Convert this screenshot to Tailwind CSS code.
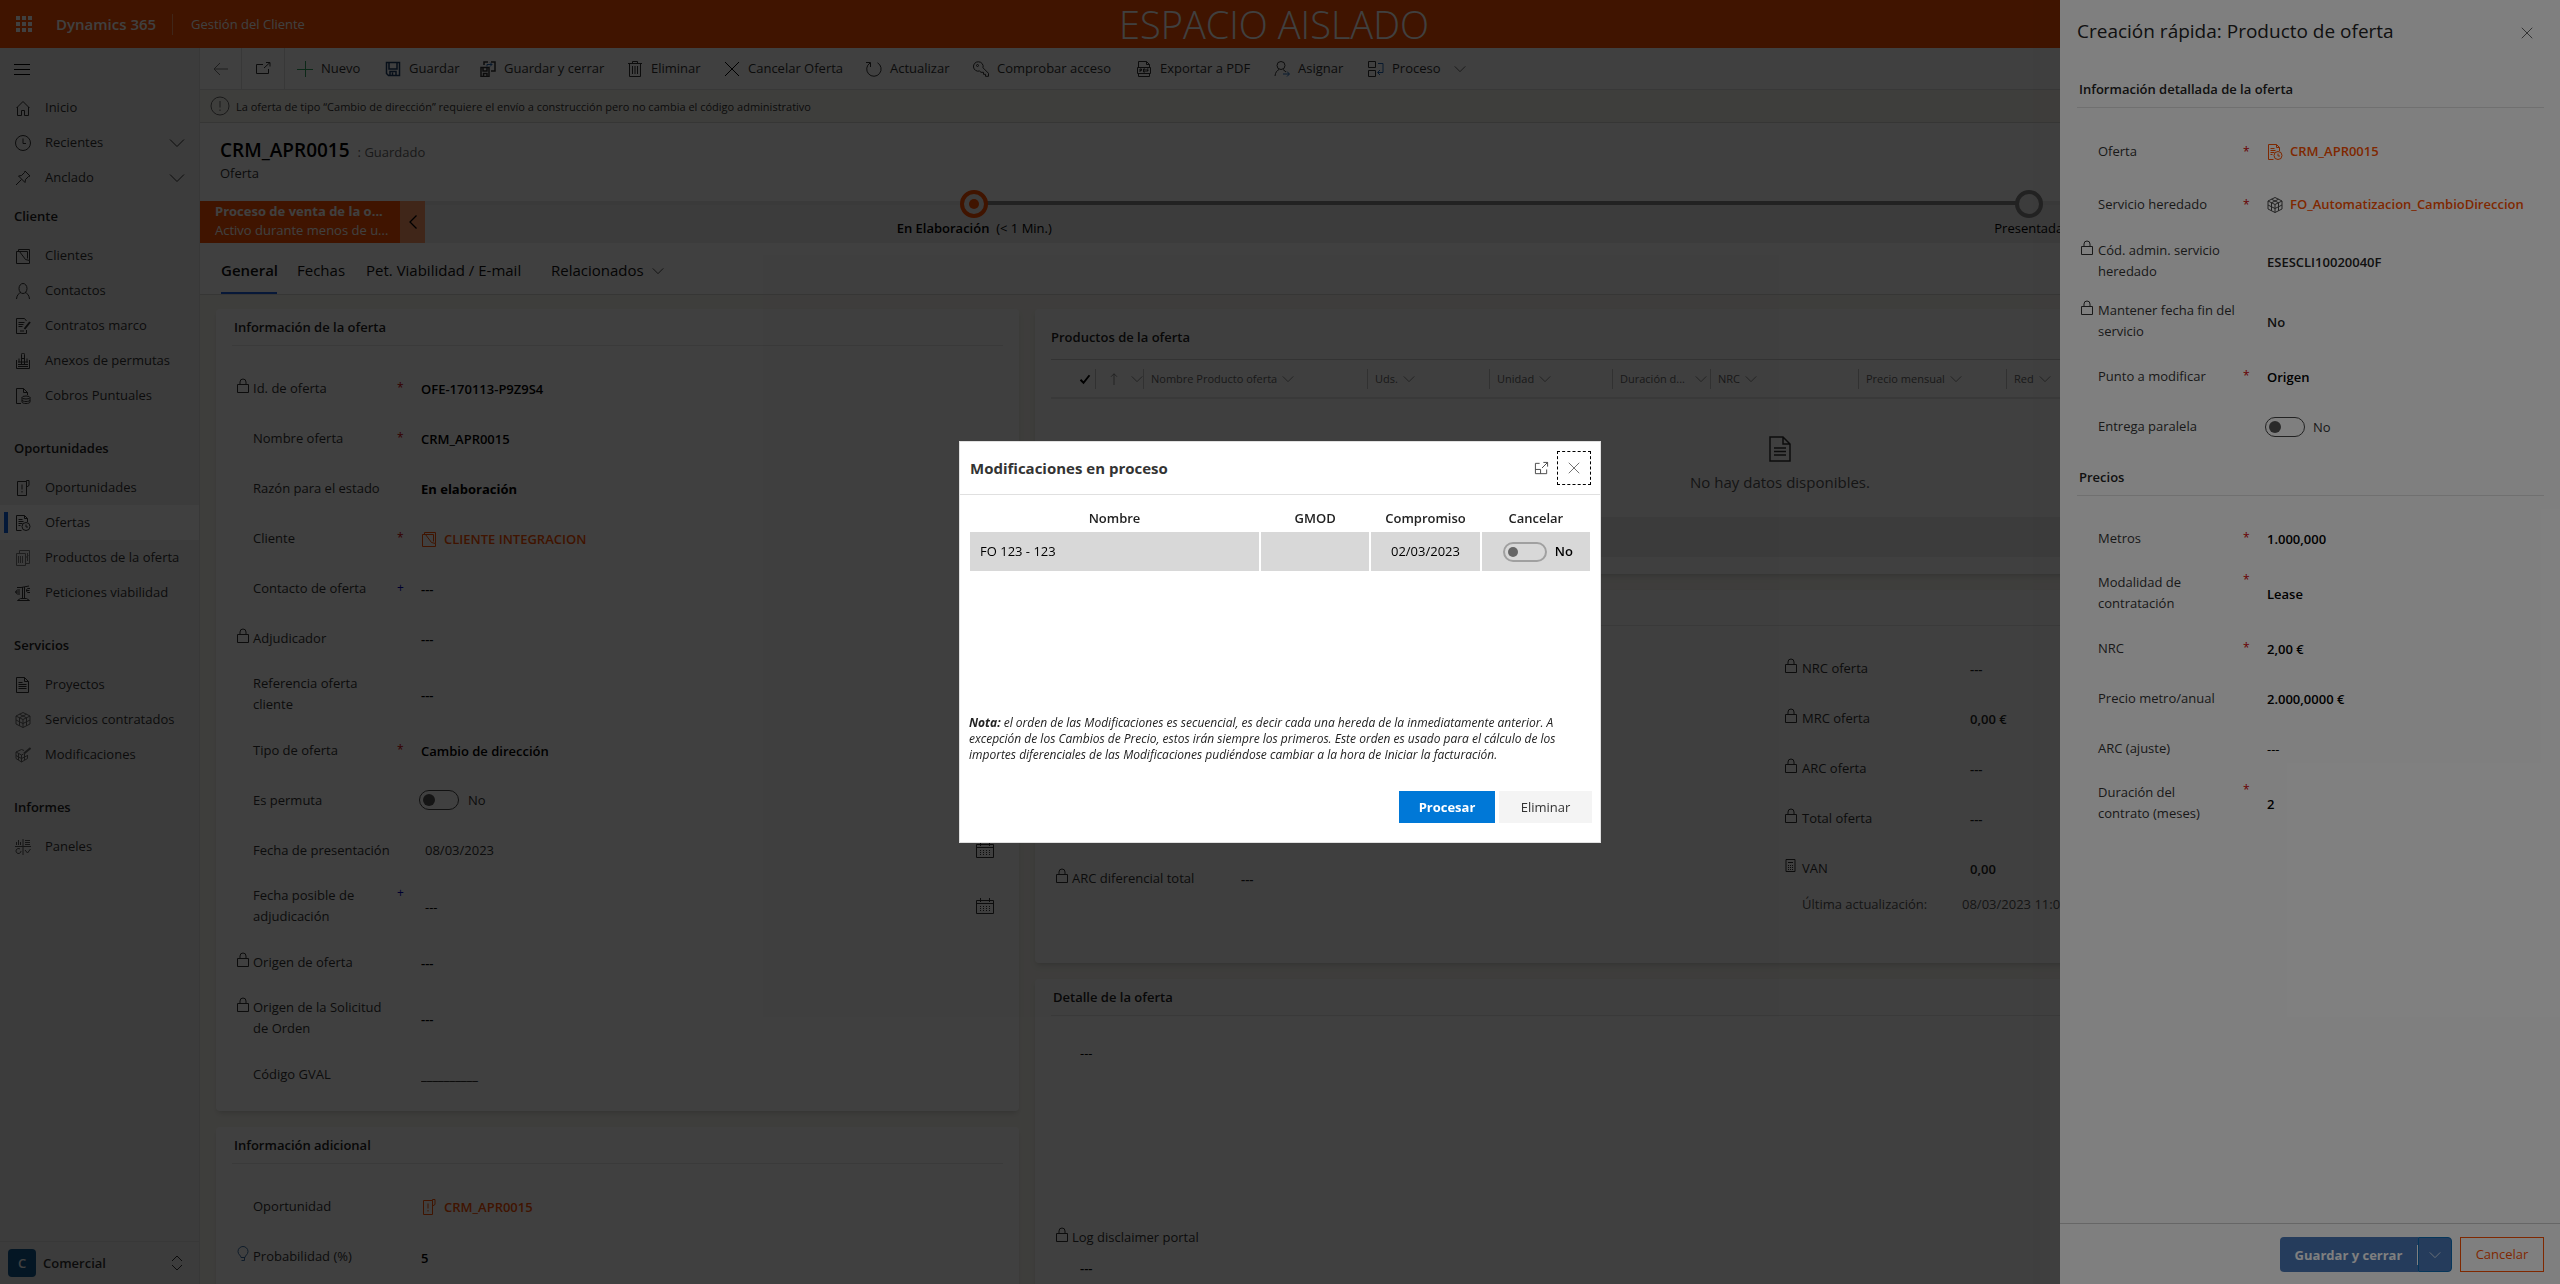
<!DOCTYPE html>
<html lang="es">
<head>
<meta charset="utf-8">
<title>CRM_APR0015 - Dynamics 365</title>
<script src="https://cdn.jsdelivr.net/npm/@tailwindcss/browser@4"></script>
</head>
<body class="h-screen overflow-hidden bg-white font-['Open_Sans','Noto_Sans',sans-serif] text-[13px] leading-[21px] text-[#333] [&_svg]:fill-none [&_svg]:stroke-current">

<!-- Icon sprite -->
<svg class="hidden" aria-hidden="true">
  <symbol id="home" viewBox="0 0 16 16"><path d="M1.500 8 8 1.500 14.500 8M2.500 7v8.500h4v-5h3v5h4V7"/></symbol>
  <symbol id="clock" viewBox="0 0 16 16"><circle cx="8" cy="8" r="7.500"/><path d="M8 3.500V8.500h3"/></symbol>
  <symbol id="pin" viewBox="0 0 16 16"><path d="M10 1l5 5-1.500.5-3 3-.5 3L3.500 6l3-.5 3-3zM6.500 9.500 1 15"/></symbol>
  <symbol id="down" viewBox="0 0 16 16"><path d="M1 4.500l7 7 7-7"/></symbol>
  <symbol id="accounts" viewBox="0 0 16 16"><path d="M1.500 3.500v12h13v-3l-4-1-6-8zM3.500 3.500v-2h11v11M3.500 3.500h9v7"/></symbol>
  <symbol id="person" viewBox="0 0 16 16"><ellipse cx="8" cy="5.500" rx="4" ry="5"/><path d="M1.500 16c.3-4 2.500-6 4.500-6.500M14.500 16c-.3-4-2.500-6-4.500-6.500"/></symbol>
  <symbol id="contract" viewBox="0 0 16 16"><path d="M11.500 12v3.500h-10V.5h8l2 2.500M3.500 4.500h6M3.500 6.500h5M3.500 8.500h4M5 13h4"/><path stroke-width="2" d="M15 4l-5.500 7"/></symbol>
  <symbol id="hand" viewBox="0 0 16 16"><path d="M1.500 7v8.500h13V7M6.500 11V1.500a1.500 1.500 0 0 1 3 0V11M3 9h10M3 11.500h10M3 13.500h10M4 5.500v4M12 5.500v4M6 5.500h4"/></symbol>
  <symbol id="coins" viewBox="0 0 16 16"><path d="M6 15.500H1.500V.5h7l4 4V7M8.500.5v4h4"/><ellipse cx="11" cy="9.500" rx="4" ry="1.500"/><path d="M7 9.500v4.500c0 2 8 2 8 0V9.500M7 12c0 2 8 2 8 0"/></symbol>
  <symbol id="opp" viewBox="0 0 16 16"><path d="M2.500 1.500h9v14h-9zM11.500 1.500v-1h2.500v5l-2.500 1.500M7 4.500v5M7 11v1.500"/></symbol>
  <symbol id="offer" viewBox="0 0 16 16"><path d="M6.500 15.500h-5V.5h8l3 3V7M9.500.5v3h3M3.500 4.500h4M3.500 6.500h5M3.500 8.500h4M3.500 10.500h2"/><circle cx="11" cy="11.500" r="4"/><path d="M11 9.500v2.500h2"/></symbol>
  <symbol id="products" viewBox="0 0 16 16"><path d="M1.500 3.500h9v12h-9zM4.500 3V.5h10v13h-4M3.500 6v7M5.500 6v7M7.500 6v7M12.500 3v8M10.500 8l3-3"/></symbol>
  <symbol id="scale" viewBox="0 0 16 16"><path d="M2 2.500h4l8-1.500M7.500 2v12M9.500 2v12M2.500 15.500l3-2h6l3 2zM5 5H2.500c-2 0-2 4 0 4H5M0 7h5M15 3.500h-2c-2 0-2 4 0 4h2M11 5.500h3.500"/></symbol>
  <symbol id="doc" viewBox="0 0 16 16"><path d="M1.500.5h8l4 4v11h-12zM9.500.5v4h4M3.500 5.500h4M3.500 7.500h8M3.500 9.500h8M3.500 11.500h8"/></symbol>
  <symbol id="cube" viewBox="0 0 16 16"><path d="M8 .5l7 3.500v8l-7 3.500L1 12V4zM1 4l7 3.500L15 4M8 7.500v8M1 8l7 3.500L15 8M4.500 2.200l7 3.600v8M11.500 2.200l-7 3.600v8"/></symbol>
  <symbol id="cubepen" viewBox="0 0 16 16"><path d="M9 3.500 6.500 2.500 1 5v6.500L6.500 15l6-3.500V8M1 5l5.500 3 2-1M6.500 8v7M1 8.500l5.500 3 6-3M3.500 6.500v6.500M9.500 7v6"/><path stroke-width="2" d="M15.500 1 9 6.500"/></symbol>
  <symbol id="panels" viewBox="0 0 16 16"><path d="M0 7.500h16M8 0v16M1.500 6V3M3.500 6V1M5.500 6V3M10 1.500h5M10 3.500h5M10 5.500h5M5 10a2.500 2.500 0 1 0 1 2M10 11l2.500 3 3-4"/></symbol>
  <symbol id="lock" viewBox="0 0 12 21"><path d="M.5 6.500h11v8H.5zM3 6.500V4a3 3 0 0 1 6 0v2.500"/></symbol>
  <symbol id="bulb" viewBox="0 0 12 21"><path d="M4 11.500c0-2-3-3-3-6a5 5 0 0 1 10 0c0 3-3 4-3 6zM4.500 14.500h3v-3"/></symbol>
  <symbol id="calc" viewBox="0 0 12 21"><path d="M1 1.500h9v12H1zM3 4.500h5"/><path stroke-dasharray="1 1" d="M3 7.500h5M3 9.500h5M3 11.500h5"/></symbol>
  <symbol id="cal" viewBox="0 0 18 16"><path d="M.5 2.500h17v13H.5zM.5 5.500h17M4.500 0v4M13.500 0v4"/><path stroke-dasharray="1 2" d="M4 8.500h11M4 10.500h11M4 12.500h11"/></symbol>
  <symbol id="back" viewBox="0 0 16 16"><path d="M15 8H1.500M7 2 1 8l6 6"/></symbol>
  <symbol id="popout" viewBox="0 0 16 16"><path d="M8 3.500H1.500v9h12V8M9 7l6-5.500M11 1.500h4v4"/></symbol>
  <symbol id="expand" viewBox="0 0 16 16"><path d="M6 2.500H1.500v11h12V9M1.500 9h5.500v4.500M8.500 7.500l6-6M10 1.500h4.500V6"/></symbol>
  <symbol id="plus" viewBox="0 0 16 16"><path d="M8.500 0v16M0 8.500h16"/></symbol>
  <symbol id="save" viewBox="0 0 16 16"><path stroke-width="1.500" d="M1.500 1.500h13v13h-11l-2-2zM4 2v6h8V2M5 14.500v-4h6v4M7.500 11.500v3"/></symbol>
  <symbol id="saveclose" viewBox="0 0 16 16"><path stroke-width="1.500" d="M1 6.500h8v9H1zM3 7v3h4V7M3.500 15v-2.500H7V15M4 4V1h4M11 1h4v9h-4"/><path stroke="#2266b3" d="M7 5.500V3.500h5M10 1.500l2 2-2 2"/></symbol>
  <symbol id="trash" viewBox="0 0 16 16"><path d="M1 2.500h14M5.500 2V.5h5V2M2.500 2.500v13h11v-13M5.500 5v8M8 5v8M10.500 5v8"/></symbol>
  <symbol id="x" viewBox="0 0 16 16"><path d="M1 1l14 14M15 1 1 15"/></symbol>
  <symbol id="refresh" viewBox="0 0 16 16"><path d="M11.500 1.800A7.200 7.200 0 1 1 4 2M4.500 6V1.500H0"/></symbol>
  <symbol id="key" viewBox="0 0 16 16"><path d="M5.500.8a4.700 4.700 0 0 1 4.500 6l5.500 5.500v3h-3v-2h-2v-2H8L6.500 10A4.700 4.700 0 1 1 5.500.8z"/><circle cx="4.500" cy="4.500" r="1"/></symbol>
  <symbol id="pdf" viewBox="0 0 16 16"><path d="M2.500 6V.5h8l3 3V6M10.500.5v3h3M1.500 6.500h13v6h-13zM2.500 13v2.500h11V13M4 11V8h1.500v1.500H4M7.500 8v3H9V8zM11 11V8h1.500M11 9.500h1.500"/></symbol>
  <symbol id="assign" viewBox="0 0 16 16"><circle cx="7" cy="4.500" r="4"/><path d="M1 15c.3-3.500 2-5.500 4-6.500M9 8.500l3 2.500"/><path stroke="#2266b3" d="M9 13h6M13 10.500l2.500 2.500-2.500 2.500"/></symbol>
  <symbol id="flow" viewBox="0 0 16 16"><path d="M.5.5h7v6h-7zM.5 9.500h7v6h-7z"/><path stroke="#2266b3" d="M10 2.500h5v9h-5M12 9l-2.500 2.500L12 14"/></symbol>
  <symbol id="info" viewBox="0 0 20 20"><circle cx="10" cy="10" r="9"/><path d="M10 5v6.500M10 13.500V15"/></symbol>
  <symbol id="check" viewBox="0 0 16 16"><path stroke-width="2.500" d="M2 9l4 4 8-10"/></symbol>
  <symbol id="up" viewBox="0 0 16 16"><path d="M8 16V1M4 5l4-4 4 4"/></symbol>
  <symbol id="left" viewBox="0 0 10 16"><path stroke-width="1.300" d="M8.500 1.500 2 8l6.500 6.500"/></symbol>
  <symbol id="nodata" viewBox="0 0 22 26"><path stroke-width="1.500" d="M1 1h13l7 7v17H1zM14 1v7h7M5 12h12M5 15.500h12M5 19h12"/></symbol>
  <symbol id="updown" viewBox="0 0 12 16"><path d="M1 6l5-5 5 5M1 10l5 5 5-5"/></symbol>
</svg>

<div class="flex h-screen flex-col">
  <header class="relative flex h-12 shrink-0 items-center bg-[#ff5000] text-white">
    <button aria-label="Iniciador de aplicaciones" class="ml-4 grid size-4 grid-cols-3 gap-[2px] [&>i]:size-1 [&>i]:bg-white"><i></i><i></i><i></i><i></i><i></i><i></i><i></i><i></i><i></i></button>
    <a href="#" class="ml-6 w-[116px] text-[15px] font-semibold">Dynamics 365</a>
    <a href="#" class="border-l border-white/40 pl-[18px] text-[13px]">Gestión del Cliente</a>
    <div class="absolute inset-x-0 pr-3 text-center text-[38px] leading-[48px] font-light">ESPACIO AISLADO</div>
  </header>

  <div class="flex min-h-0 flex-1">
    <nav class="flex w-[200px] shrink-0 flex-col border-r border-[#ddd] bg-[#efefef] [&_a]:flex [&_a]:h-[35px] [&_a]:items-center [&_a]:gap-[14px] [&_a]:pl-[15px] [&_a]:whitespace-nowrap [&_h2]:h-[43px] [&_h2]:pl-[14px] [&_h2]:leading-[43px] [&_h2]:font-semibold [&_h2]:text-[#222] [&_svg]:size-4 [&_svg]:shrink-0">
      <button aria-label="Menú" class="ml-[14px] flex h-[42px] w-4 flex-col justify-center gap-1 [&>i]:h-px [&>i]:bg-black"><i></i><i></i><i></i></button>
      <a href="#"><svg><use href="#home"/></svg>Inicio</a>
      <a href="#"><svg><use href="#clock"/></svg><span class="flex-1">Recientes</span><svg class="mr-[14px]"><use href="#down"/></svg></a>
      <a href="#"><svg><use href="#pin"/></svg><span class="flex-1">Anclado</span><svg class="mr-[14px]"><use href="#down"/></svg></a>
      <h2>Cliente</h2>
      <a href="#"><svg><use href="#accounts"/></svg>Clientes</a>
      <a href="#"><svg><use href="#person"/></svg>Contactos</a>
      <a href="#"><svg><use href="#contract"/></svg>Contratos marco</a>
      <a href="#"><svg><use href="#hand"/></svg>Anexos de permutas</a>
      <a href="#"><svg><use href="#coins"/></svg>Cobros Puntuales</a>
      <h2 class="mt-[14px]">Oportunidades</h2>
      <a href="#"><svg><use href="#opp"/></svg>Oportunidades</a>
      <a href="#" class="relative bg-[#fdfdfd]"><i class="absolute left-1 h-[21px] w-1 bg-[#0f5fe0]"></i><svg><use href="#offer"/></svg>Ofertas</a>
      <a href="#"><svg class="text-[#777]"><use href="#products"/></svg>Productos de la oferta</a>
      <a href="#"><svg><use href="#scale"/></svg>Peticiones viabilidad</a>
      <h2 class="mt-[14px]">Servicios</h2>
      <a href="#"><svg><use href="#doc"/></svg>Proyectos</a>
      <a href="#"><svg class="text-[#666]"><use href="#cube"/></svg>Servicios contratados</a>
      <a href="#"><svg class="text-[#666]"><use href="#cubepen"/></svg>Modificaciones</a>
      <h2 class="mt-[14px]">Informes</h2>
      <a href="#"><svg class="text-[#555]"><use href="#panels"/></svg>Paneles</a>
      <button class="mt-auto flex h-[43px] items-center border-t border-[#ddd] pl-2 text-left font-semibold">
        <span class="mr-[7px] size-7 rounded-sm bg-[#11588f] text-center leading-7 text-white">C</span>Comercial
        <svg class="mr-[14px] ml-auto"><use href="#updown"/></svg>
      </button>
    </nav>

    <main class="flex min-w-0 flex-1 flex-col">
      <div class="flex h-[42px] shrink-0 border-b border-[#ddd] [&_svg]:size-4 [&_svg]:shrink-0 [&>button]:flex [&>button]:items-center [&>button]:gap-2 [&>button]:whitespace-nowrap">
        <button aria-label="Atrás" class="w-[42px] justify-center border-r border-[#ddd] text-[#777]"><svg><use href="#back"/></svg></button>
        <button aria-label="Abrir en ventana nueva" class="w-[43px] justify-center border-r border-[#ddd]"><svg><use href="#popout"/></svg></button>
        <button class="ml-3 w-[88px]"><svg class="text-[#2f9e5b]"><use href="#plus"/></svg>Nuevo</button>
        <button class="w-[95px]"><svg class="text-[#1d3d66]"><use href="#save"/></svg>Guardar</button>
        <button class="w-[147px]"><svg><use href="#saveclose"/></svg>Guardar y cerrar</button>
        <button class="w-[97px]"><svg><use href="#trash"/></svg>Eliminar</button>
        <button class="w-[142px]"><svg class="text-black"><use href="#x"/></svg>Cancelar Oferta</button>
        <button class="w-[107px]"><svg><use href="#refresh"/></svg>Actualizar</button>
        <button class="w-[163px]"><svg><use href="#key"/></svg>Comprobar acceso</button>
        <button class="w-[138px]"><svg><use href="#pdf"/></svg>Exportar a PDF</button>
        <button class="w-[94px]"><svg><use href="#assign"/></svg>Asignar</button>
        <button class="w-[100px]"><svg><use href="#flow"/></svg>Proceso<svg class="ml-auto p-[2px]"><use href="#down"/></svg></button>
      </div>

      <div class="flex h-[33px] shrink-0 items-center gap-[6px] border-b border-[#d8d8d4] bg-[#f8f7ee] pl-[10px] text-[11px]"><svg class="size-5 text-[#666]"><use href="#info"/></svg>La oferta de tipo “Cambio de dirección” requiere el envío a construcción pero no cambia el código administrativo</div>

      <div class="h-[78px] shrink-0 pt-[14px] pl-5">
        <div class="flex h-[26px] items-baseline gap-2"><h1 class="text-[19px] leading-[26px] font-semibold text-black">CRM_APR0015</h1><span class="text-[#666]">: Guardado</span></div>
        <div class="font-medium">Oferta</div>
      </div>

      <div class="flex h-[42px] shrink-0 bg-[#efefef]">
        <div class="w-[200px] bg-[#ff5000] pt-px pl-[15px] leading-[19px] text-white"><div class="font-bold">Proceso de venta de la o...</div><div>Activo durante menos de u...</div></div>
        <button aria-label="Contraer" class="flex w-[25px] items-center justify-center bg-[#ff9666] text-black"><svg class="h-4 w-[10px]"><use href="#left"/></svg></button>
        <ol class="relative flex flex-1 border-t-4 border-[#e6e6e6] pr-1 pl-[22px] text-center text-black">
          <li class="relative flex-1 pt-[13px]">
            <i class="absolute -top-1 left-1/2 h-1 w-full bg-[#888]"></i>
            <button aria-label="En Elaboración" class="absolute -top-[15px] left-1/2 flex size-7 -translate-x-1/2 items-center justify-center rounded-full border-4 border-[#ff5000] bg-[#eee]"><i class="size-[10px] rounded-full bg-[#ff5000]"></i></button>
            <b class="font-semibold">En Elaboración</b>&nbsp; <span class="font-medium">(&lt; 1 Min.)</span>
          </li>
          <li class="relative flex-1 pt-[13px]">
            <button aria-label="Presentada" class="absolute -top-[15px] left-1/2 size-7 -translate-x-1/2 rounded-full border-4 border-[#888] bg-[#eee]"></button>
            Presentada
          </li>
        </ol>
      </div>

      <div role="tablist" class="flex h-[52px] shrink-0 border-b border-[#d8d8d4] pl-[21px] text-[15px] text-[#111] [&>button]:h-[51px] [&>button]:pt-1 [&>button]:text-left [&>button]:whitespace-nowrap">
        <button role="tab" class="mr-5 w-14 border-b-2 border-[#1f5fdf] pt-[6px]! font-semibold">General</button>
        <button role="tab" class="w-[69px]">Fechas</button>
        <button role="tab" class="w-[185px]">Pet. Viabilidad / E-mail</button>
        <button role="tab" class="flex items-center gap-2">Relacionados<svg class="size-3"><use href="#down"/></svg></button>
      </div>

      <div class="grid min-h-0 flex-1 grid-cols-[803fr_1490fr] gap-4 overflow-hidden bg-[#f8f7f0] pt-[14px] pr-[35px] pl-4">
        <div class="flex flex-col gap-4">
          <section class="rounded bg-white px-4 pb-3 shadow-md">
            <h2 class="border-b border-[#e6e6e6] pl-[2px] leading-9 font-semibold text-[#222]">Información de la oferta</h2>
            <div class="pt-[17px] pl-[5px] [&_i]:text-xs [&_i]:text-[#d00000] [&_i]:not-italic [&_input]:mt-[2px] [&_input]:w-full [&_input]:font-semibold [&_input]:text-black [&_svg]:h-[21px] [&_svg]:w-3 [&>div]:grid [&>div]:min-h-[50px] [&>div]:grid-cols-[16px_144px_24px_1fr] [&>div]:items-center [&>div]:py-[10px]">
              <div><svg><use href="#lock"/></svg><label for="f1">Id. de oferta</label><i>*</i><input id="f1" value="OFE-170113-P9Z9S4" readonly></div>
              <div><span></span><label for="f2">Nombre oferta</label><i>*</i><input id="f2" value="CRM_APR0015"></div>
              <div><span></span><label for="f3">Razón para el estado</label><span></span><input id="f3" class="font-bold!" value="En elaboración"></div>
              <div><span></span><span>Cliente</span><i>*</i><a href="#" class="mt-[2px] flex items-center gap-[7px] font-semibold text-[#ff5000]"><svg class="size-4!"><use href="#accounts"/></svg>CLIENTE INTEGRACION</a></div>
              <div><span></span><label for="f5">Contacto de oferta</label><i class="text-[#0000c0]!">+</i><input id="f5" value="---"></div>
              <div><svg><use href="#lock"/></svg><label for="f6">Adjudicador</label><span></span><input id="f6" value="---" readonly></div>
              <div><span></span><label for="f7">Referencia oferta<br>cliente</label><span></span><input id="f7" value="---"></div>
              <div><span></span><label for="f8">Tipo de oferta</label><i>*</i><input id="f8" value="Cambio de dirección"></div>
              <div><span></span><label for="f9">Es permuta</label><span></span><span class="flex items-center"><input id="f9" type="checkbox" role="switch" class="mt-0! -ml-[2px] mr-[9px] h-5 w-10! appearance-none rounded-full border border-[#444] before:m-[3px] before:block before:size-3 before:rounded-full before:bg-[#555]">No</span></div>
              <div><span></span><label for="f10">Fecha de presentación</label><span></span><span class="flex items-center pr-[9px] pl-1"><input id="f10" class="mt-0! font-normal! text-[#333]!" value="08/03/2023"><svg class="h-4! w-[18px]! shrink-0"><use href="#cal"/></svg></span></div>
              <div><span></span><label for="f11">Fecha posible de<br>adjudicación</label><i class="self-start text-[#0000c0]!">+</i><span class="flex items-center pr-[9px] pl-1"><input id="f11" class="font-normal!" value="---"><svg class="h-4! w-[18px]! shrink-0"><use href="#cal"/></svg></span></div>
              <div><svg><use href="#lock"/></svg><label for="f12">Origen de oferta</label><span></span><input id="f12" value="---" readonly></div>
              <div><svg class="self-start"><use href="#lock"/></svg><label for="f13">Origen de la Solicitud<br>de Orden</label><span></span><input id="f13" value="---" readonly></div>
              <div><span></span><label for="f14">Código GVAL</label><span></span><input id="f14" class="font-normal!" value="__________"></div>
            </div>
          </section>
          <section class="h-60 shrink-0 rounded bg-white px-4 shadow-md">
            <h2 class="border-b border-[#e6e6e6] pl-[2px] leading-9 font-semibold text-[#222]">Información adicional</h2>
            <div class="pt-[17px] pl-[5px] [&_svg]:h-[21px] [&_svg]:w-3 [&>div]:grid [&>div]:h-[50px] [&>div]:grid-cols-[16px_144px_24px_1fr] [&>div]:items-center">
              <div><span></span><span>Oportunidad</span><span></span><a href="#" class="mt-[2px] flex items-center gap-[7px] font-semibold text-[#ff5000]"><svg class="size-4!"><use href="#opp"/></svg>CRM_APR0015</a></div>
              <div><svg class="text-[#3a6ea5]"><use href="#bulb"/></svg><label for="g1">Probabilidad (%)</label><span></span><input id="g1" class="mt-1 font-semibold text-black" value="5"></div>
            </div>
          </section>
        </div>

        <div class="flex flex-col gap-4">
          <section class="h-[265px] shrink-0 rounded bg-white px-4 shadow-md">
            <h2 class="border-b border-[#ccc] pt-[18px] pb-[11px] font-semibold text-[#222]">Productos de la oferta</h2>
            <table class="w-full table-fixed border-b-2 border-[#e4e4e4] text-left text-[11px] text-[#666] [&_div]:flex [&_div]:h-5 [&_div]:items-center [&_div]:gap-[5px] [&_div]:whitespace-nowrap [&_svg]:size-3 [&_th]:h-[38px] [&_th]:p-0 [&_th]:font-medium [&_th+th>div]:border-l [&_th+th>div]:border-[#c4c4c4] [&_th+th>div]:pl-[7px]">
              <thead><tr>
                <th class="w-11"><div class="pl-7 text-black"><svg><use href="#check"/></svg></div></th>
                <th class="w-12"><div class="justify-between pl-3!"><svg><use href="#up"/></svg><svg><use href="#down"/></svg></div></th>
                <th class="w-56"><div>Nombre Producto oferta<svg><use href="#down"/></svg></div></th>
                <th class="w-[122px]"><div>Uds.<svg><use href="#down"/></svg></div></th>
                <th class="w-[123px]"><div>Unidad<svg><use href="#down"/></svg></div></th>
                <th class="w-[98px]"><div>Duración d...<svg class="mr-[3px] ml-auto"><use href="#down"/></svg></div></th>
                <th class="w-[148px]"><div>NRC<svg><use href="#down"/></svg></div></th>
                <th class="w-[148px]"><div>Precio mensual<svg><use href="#down"/></svg></div></th>
                <th><div>Red<svg><use href="#down"/></svg></div></th>
              </tr></thead>
            </table>
            <div class="flex h-[118px] flex-col items-center pt-[37px] text-[15px] text-[#555]"><svg class="mb-[10px] h-[26px] w-[22px] text-[#333]"><use href="#nodata"/></svg>No hay datos disponibles.</div>
            <div class="h-10 bg-[#efefef]"></div>
          </section>

          <section class="h-[373px] shrink-0 rounded bg-white px-4 shadow-md">
            <div class="h-9 border-b border-[#e6e6e6]"></div>
            <div class="flex [&_input]:mt-[2px] [&_input]:font-semibold [&_input]:text-[#222] [&_p]:grid [&_p]:h-[50px] [&_p]:items-center [&_svg]:h-[21px] [&_svg]:w-3">
              <div class="w-[730px] pt-[227px] pl-[5px]">
                <p class="grid-cols-[16px_169px_1fr]"><svg><use href="#lock"/></svg><label for="h0">ARC diferencial total</label><input id="h0" value="---" readonly></p>
              </div>
              <div class="flex-1 pt-[17px] pl-1 [&_p]:grid-cols-[17px_168px_1fr]">
                <p><svg><use href="#lock"/></svg><label for="h1">NRC oferta</label><input id="h1" value="---" readonly></p>
                <p><svg><use href="#lock"/></svg><label for="h2">MRC oferta</label><input id="h2" value="0,00 €" readonly></p>
                <p><svg><use href="#lock"/></svg><label for="h3">ARC oferta</label><input id="h3" value="---" readonly></p>
                <p><svg><use href="#lock"/></svg><label for="h4">Total oferta</label><input id="h4" value="---" readonly></p>
                <p><svg><use href="#calc"/></svg><label for="h5">VAN</label><input id="h5" value="0,00" readonly></p>
                <div class="mt-px flex pl-[17px] text-[#555]"><span class="w-40">Última actualización:</span><time>08/03/2023 11:02</time></div>
              </div>
            </div>
          </section>

          <section class="h-[400px] shrink-0 rounded bg-white px-4 shadow-md [&_input]:block [&_input]:pl-[29px] [&_input]:text-black">
            <h2 class="border-b border-[#e6e6e6] pl-[2px] leading-9 font-semibold text-[#222]">Detalle de la oferta</h2>
            <input aria-label="Detalle" class="mt-[27px]" value="---">
            <div class="mt-[163px] flex pl-[5px]"><svg class="mr-1 h-[21px] w-3"><use href="#lock"/></svg><label for="k2">Log disclaimer portal</label></div>
            <input id="k2" class="mt-[10px] font-semibold" value="---" readonly>
          </section>
        </div>
      </div>
    </main>
  </div>
</div>

<!-- Quick create panel -->
<div class="fixed inset-0 bg-black/50"></div>
<aside class="fixed inset-y-0 right-0 flex w-[500px] flex-col bg-white">
  <div class="flex h-[71px] shrink-0 items-start justify-between pt-[18px] pr-[26px] pl-[17px]">
    <h2 class="text-[19px] leading-[26px] font-medium text-[#222]">Creación rápida: Producto de oferta</h2>
    <button aria-label="Cerrar" class="p-px pt-[9px]"><svg class="size-3"><use href="#x"/></svg></button>
  </div>
  <div class="flex-1 pr-4 pl-[17px] [&_h3]:border-b [&_h3]:border-[#e0e0e0] [&_h3]:pl-[2px] [&_h3]:leading-9 [&_h3]:font-semibold [&_h3]:text-[#222] [&_i]:text-xs [&_i]:text-[#d00000] [&_i]:not-italic [&_input]:mt-[2px] [&_input]:w-full [&_input]:font-semibold [&_input]:text-black [&_section]:pt-[17px] [&_section]:pl-1 [&_section>div]:grid [&_section>div]:min-h-[50px] [&_section>div]:grid-cols-[17px_145px_24px_1fr] [&_section>div]:items-center [&_section>div]:py-[9px] [&_svg]:h-[21px] [&_svg]:w-3">
    <h3>Información detallada de la oferta</h3>
    <section>
      <div class="min-h-[53px]!"><span></span><span>Oferta</span><i>*</i><a href="#" class="flex items-center gap-[7px] font-semibold text-[#ff5000]"><svg class="size-4!"><use href="#offer"/></svg>CRM_APR0015</a></div>
      <div class="min-h-[53px]!"><span></span><span>Servicio heredado</span><i>*</i><a href="#" class="flex items-center gap-[7px] font-semibold text-[#ff5000]"><svg class="size-4! text-[#444]"><use href="#cube"/></svg>FO_Automatizacion_CambioDireccion</a></div>
      <div><svg class="self-start"><use href="#lock"/></svg><label for="q3">Cód. admin. servicio<br>heredado</label><span></span><input id="q3" class="text-[#222]!" value="ESESCLI10020040F" readonly></div>
      <div><svg class="self-start"><use href="#lock"/></svg><label for="q4">Mantener fecha fin del<br>servicio</label><span></span><input id="q4" class="text-[#222]!" value="No" readonly></div>
      <div><span></span><label for="q5">Punto a modificar</label><i>*</i><input id="q5" value="Origen"></div>
      <div><span></span><label for="q6">Entrega paralela</label><span></span><span class="flex items-center pt-[2px]"><input id="q6" type="checkbox" role="switch" class="mt-0! -ml-[2px] mr-[8px] h-5 w-10! appearance-none rounded-full border border-[#444] before:m-[3px] before:block before:size-3 before:rounded-full before:bg-[#555]">No</span></div>
    </section>
    <h3 class="mt-2">Precios</h3>
    <section>
      <div><span></span><label for="q7">Metros</label><i>*</i><input id="q7" value="1.000,000"></div>
      <div><span></span><label for="q8">Modalidad de<br>contratación</label><i class="self-start">*</i><input id="q8" value="Lease"></div>
      <div><span></span><label for="q9">NRC</label><i>*</i><input id="q9" value="2,00 €"></div>
      <div><span></span><label for="q10">Precio metro/anual</label><span></span><input id="q10" value="2.000,0000 €"></div>
      <div><span></span><label for="q11">ARC (ajuste)</label><span></span><input id="q11" class="font-normal!" value="---"></div>
      <div><span></span><label for="q12">Duración del<br>contrato (meses)</label><i class="self-start">*</i><input id="q12" value="2"></div>
    </section>
  </div>
  <footer class="flex h-[61px] shrink-0 justify-end border-t border-[#ccc] pt-[13px] pr-4">
    <button class="flex h-[35px] w-[138px] items-center rounded-l-sm bg-[#4a78b8] font-bold text-white"><span class="flex-1 border-r border-white leading-5">Guardar y cerrar</span></button>
    <button aria-label="Más opciones" class="mr-2 flex h-[35px] w-[34px] items-center justify-center rounded-r-sm border border-[#0c6cb4] bg-[#4a78b8] text-white"><svg class="size-3"><use href="#down"/></svg></button>
    <button class="h-[35px] w-[84px] border border-[#ff5000] text-[#ff5000]">Cancelar</button>
  </footer>
</aside>

<!-- Modal dialog -->
<div class="fixed inset-0 flex items-center justify-center bg-black/50">
  <div role="dialog" aria-labelledby="dlg" class="h-[402px] w-[642px] border border-[#e0e0e0] bg-white">
    <div class="flex h-[53px] items-center border-b border-[#e0e0e0] pr-[9px] pl-[10px]">
      <h2 id="dlg" class="flex-1 text-[15px] font-bold text-[#333]">Modificaciones en proceso</h2>
      <button aria-label="Expandir" class="mr-2 text-[#444]"><svg class="size-[15px]"><use href="#expand"/></svg></button>
      <button aria-label="Cerrar" class="flex size-[34px] items-center justify-center border border-dashed border-black text-[#444]"><svg class="size-3"><use href="#x"/></svg></button>
    </div>
    <table class="mt-[10px] ml-2 w-[624px] table-fixed border-separate border-spacing-x-[2px] border-spacing-y-0 text-black [&_td]:h-[39px] [&_td]:bg-[#d8d8d8] [&_td]:p-0 [&_th]:h-[27px] [&_th]:p-0 [&_th]:font-semibold [&_th]:text-[#222]">
      <thead><tr><th class="w-[289px]">Nombre</th><th>GMOD</th><th>Compromiso</th><th>Cancelar</th></tr></thead>
      <tbody><tr><td class="pl-[10px]!">FO 123 - 123</td><td></td><td class="text-center">02/03/2023</td>
        <td><label class="flex items-center justify-center gap-2 font-semibold"><input type="checkbox" role="switch" class="ml-1 h-5 w-11 shrink-0 appearance-none rounded-full border-2 border-[#a0a0a0] before:m-[3px] before:block before:size-[10px] before:rounded-full before:bg-[#666]">No</label></td></tr></tbody>
    </table>
    <p class="mt-[144px] ml-[9px] text-[12px] leading-4 whitespace-nowrap text-[#222] italic"><b>Nota:</b> el orden de las Modificaciones es secuencial, es decir cada una hereda de la inmediatamente anterior. A<br>excepción de los Cambios de Precio, estos irán siempre los primeros. Este orden es usado para el cálculo de los<br>importes diferenciales de las Modificaciones pudiéndose cambiar a la hora de Iniciar la facturación.</p>
    <div class="mt-7 mr-2 flex justify-end gap-1">
      <button class="h-8 w-24 bg-[#0078d7] font-bold text-white">Procesar</button>
      <button class="h-8 w-[93px] bg-[#f4f4f4] font-medium text-[#333]">Eliminar</button>
    </div>
  </div>
</div>
</body>
</html>
